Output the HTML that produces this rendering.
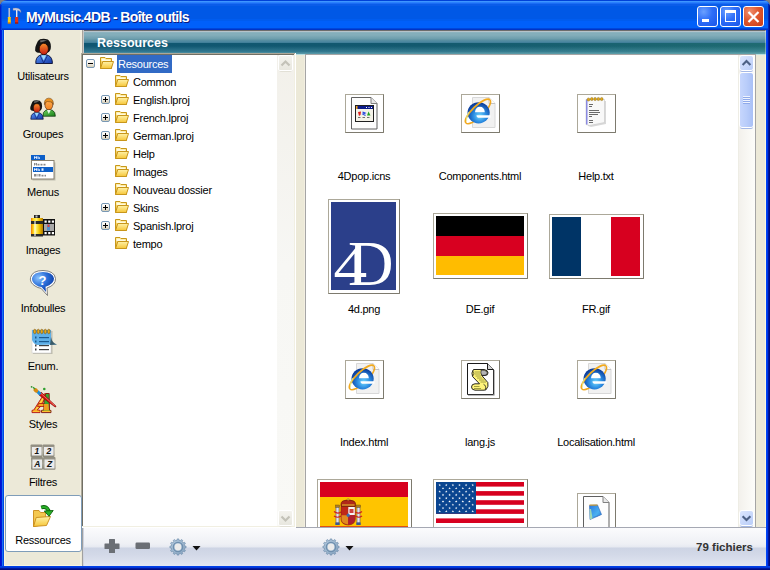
<!DOCTYPE html>
<html><head><meta charset="utf-8">
<style>
*{box-sizing:border-box}
html,body{margin:0;padding:0}
body{width:770px;height:570px;overflow:hidden;position:relative;background:#808080;font-family:"Liberation Sans",sans-serif;font-size:11px;color:#000}
.a{position:absolute}
#win{position:absolute;left:0;top:0;width:770px;height:570px;border-radius:7px 7px 0 0;overflow:hidden;
 background:linear-gradient(90deg,#0012d0 0 1px,#0018d8 1px 2px,#1a70f2 2px 3px,#0048e4 3px 4px,transparent 4px 766px,#0045f5 766px 767px,#0038e8 767px 768px,#0018a0 768px 769px,#000c80 769px)}
#title{left:0;top:0;width:770px;height:30px;
 background:linear-gradient(180deg,#0041d8 0 1px,#3d95ff 1px 2px,#2a80fc 2px 3px,#1a6cf5 3px 4px,#0a5ce9 4px 6px,#0058e6 6px 19px,#005cef 19px 21px,#0060fa 21px 28px,#0047da 28px 29px,#0034c8 29px 30px)}
#ttext{left:26px;top:9px;font-weight:bold;font-size:14px;line-height:16px;color:#fff;text-shadow:1px 1px 0 #0a1a80;white-space:nowrap;letter-spacing:-0.65px}
#bottom{left:0;top:566px;width:770px;height:4px;background:linear-gradient(180deg,#0040e8 0 1px,#0038d8 1px 2px,#0018a0 2px 3px,#000e80 3px)}
#client{left:4px;top:30px;width:762px;height:536px;background:#ece9d8}
.tb{top:6px;width:21px;height:21px;border:1px solid #fff;border-radius:3px}
.lbl{position:absolute;white-space:nowrap;line-height:13px;text-align:center;width:120px;letter-spacing:-0.25px}
.tr{position:absolute;white-space:nowrap;line-height:13px;letter-spacing:-0.25px}
.frm{position:absolute;border:1px solid #aca899;border-right-color:#8d8a7c;border-bottom-color:#77756a;background:#fff}
</style></head>
<body>
<div id="win">
 <div id="title" class="a"></div>
 <div class="a" style="left:0;top:4px;width:1px;height:26px;background:#0020c8"></div>
 <div class="a" style="left:1px;top:5px;width:1px;height:25px;background:#0040e0"></div>
 <div class="a" style="left:768px;top:4px;width:1px;height:26px;background:#0028b8"></div>
 <div class="a" style="left:769px;top:5px;width:1px;height:25px;background:#001090"></div>
 <div id="ttext" class="a">MyMusic.4DB - Boîte outils</div>
 <div id="bottom" class="a"></div>
 <div id="client" class="a"></div>
 <!-- title buttons -->
 <div class="a tb" style="left:697px;background:radial-gradient(circle at 30% 25%,#6aa0ff 0,#2e6ef8 45%,#1a55e8 100%)"><div class="a" style="left:4px;top:12px;width:7px;height:3px;background:#fff"></div></div>
 <div class="a tb" style="left:720px;background:radial-gradient(circle at 30% 25%,#6aa0ff 0,#2e6ef8 45%,#1a55e8 100%)"><div class="a" style="left:4px;top:3px;width:11px;height:12px;border:1px solid #fff;border-top-width:3px"></div></div>
 <div class="a tb" style="left:743px;background:radial-gradient(circle at 30% 25%,#f09070 0,#e0582f 45%,#c83c18 100%)">
  <svg class="a" style="left:0;top:0" width="19" height="19"><path d="M4.5 5 L14.5 15 M14.5 5 L4.5 15" stroke="#fff" stroke-width="2.2"/></svg></div>

 <!-- client highlights -->
 <div class="a" style="left:4px;top:30px;width:1px;height:536px;background:#f8f4e0"></div>
 <div class="a" style="left:4px;top:565px;width:78px;height:1px;background:#f8f4e0"></div>

 <!-- header -->
 <div class="a" style="left:81px;top:30px;width:1px;height:23px;background:#f4f0e0"></div>
 <div class="a" style="left:82px;top:30px;width:1px;height:23px;background:#a8a49c"></div>
 <div class="a" style="left:83px;top:30px;width:1px;height:23px;background:#c8c8c8"></div>
 <div class="a" id="hdr" style="left:84px;top:30px;width:682px;height:25px;
  background:linear-gradient(180deg,#6c6c6c 0 1px,#b6c3ca 1px 2px,#8cb3bf 2px 3px,#84aebb 3px 5px,#6b9cac 9px,#5a90a2 10px,#4a86a0 12px,#3a7a94 13px,transparent 13px),
  linear-gradient(90deg,#0f5672 0,#13596f 50%,#1f6b72 100%)"></div>
 <div class="a" style="left:84px;top:43px;width:682px;height:12px;
  background:linear-gradient(180deg,rgba(255,255,255,0) 0,rgba(255,255,255,0) 3px,rgba(120,190,210,.35) 9px,rgba(140,200,210,.55) 10px 11px,rgba(200,235,235,.9) 11px)"></div>
 <div class="a" style="left:97px;top:35px;font-weight:bold;font-size:12.5px;line-height:16px;color:#fff;white-space:nowrap">Ressources</div>

 <!-- tree panel -->
 <div class="a" id="tree" style="left:81px;top:53px;width:215px;height:475px;background:#fff;
  border-style:solid;border-width:2px;border-color:#716f64 #fff #fff #716f64;overflow:hidden">
 </div>
 <div class="a" style="left:81px;top:53px;width:214px;height:1px;background:#aca899"></div>
 <div class="a" style="left:81px;top:53px;width:1px;height:474px;background:#aca899"></div>
 <div class="a" style="left:82px;top:54px;width:212px;height:1px;background:#716f64"></div>
 <div class="a" style="left:82px;top:54px;width:1px;height:472px;background:#716f64"></div>
 <div class="a" style="left:294px;top:54px;width:1px;height:473px;background:#f1efe2"></div>
 <div class="a" style="left:82px;top:526px;width:213px;height:1px;background:#f1efe2"></div>
 <div class="a" style="left:295px;top:53px;width:1px;height:475px;background:#fff"></div>

 <!-- tree scrollbar (disabled) -->
 <div class="a" style="left:277px;top:55px;width:17px;height:471px;background:linear-gradient(180deg,#f2f0ea,#f7f7f4 45%,#f9f9f6)"></div>
 <div class="a" style="left:279px;top:70px;width:13px;height:2px;background:#e2e0d6;border-radius:0 0 2px 2px"></div>
 <div class="a" style="left:279px;top:525px;width:13px;height:2px;background:#e2e0d6;border-radius:0 0 2px 2px"></div>
 <div class="a" style="left:278px;top:55px;width:15px;height:16px;border:1px solid #fff;border-radius:2px;background:linear-gradient(180deg,#f4f3ee,#e8e7df)"></div>
 <svg class="a" style="left:278px;top:55px" width="15" height="16"><path d="M3.5 10.5 L7.5 6.5 L11.5 10.5" stroke="#c3c2b8" stroke-width="2.2" fill="none"/></svg>
 <div class="a" style="left:278px;top:510px;width:15px;height:16px;border:1px solid #fff;border-radius:2px;background:linear-gradient(180deg,#f4f3ee,#e8e7df)"></div>
 <svg class="a" style="left:278px;top:510px" width="15" height="16"><path d="M3.5 6.5 L7.5 10.5 L11.5 6.5" stroke="#c3c2b8" stroke-width="2.2" fill="none"/></svg>

 <!-- right panel -->
 <div class="a" style="left:305px;top:54px;width:451px;height:474px;background:#fff;border:1px solid #a5a5a5;border-bottom:none;overflow:hidden" id="files">
 </div>

 <!-- tree text -->
 <div class="a" style="left:117px;top:55px;width:55px;height:18px;background:#316ac5"></div>
 <div class="tr" style="left:118px;top:58px;color:#fff">Resources</div>
 <div class="tr" style="left:133px;top:76px">Common</div>
 <div class="tr" style="left:133px;top:94px">English.lproj</div>
 <div class="tr" style="left:133px;top:112px">French.lproj</div>
 <div class="tr" style="left:133px;top:130px">German.lproj</div>
 <div class="tr" style="left:133px;top:148px">Help</div>
 <div class="tr" style="left:133px;top:166px">Images</div>
 <div class="tr" style="left:133px;top:184px">Nouveau dossier</div>
 <div class="tr" style="left:133px;top:202px">Skins</div>
 <div class="tr" style="left:133px;top:220px">Spanish.lproj</div>
 <div class="tr" style="left:133px;top:238px">tempo</div>

 <!-- file labels -->
 <div class="lbl" style="left:304px;top:170px">4Dpop.icns</div>
 <div class="lbl" style="left:420px;top:170px">Components.html</div>
 <div class="lbl" style="left:536px;top:170px">Help.txt</div>
 <div class="lbl" style="left:304px;top:303px">4d.png</div>
 <div class="lbl" style="left:420px;top:303px">DE.gif</div>
 <div class="lbl" style="left:536px;top:303px">FR.gif</div>
 <div class="lbl" style="left:304px;top:436px">Index.html</div>
 <div class="lbl" style="left:420px;top:436px">lang.js</div>
 <div class="lbl" style="left:536px;top:436px">Localisation.html</div>
 <!-- right scrollbar -->
 <div class="a" style="left:738px;top:55px;width:17px;height:472px;background:linear-gradient(90deg,#eeede5 0 1px,#f3f1ec 1px,#fdfdfa 100%)"></div>
 <div class="a" style="left:740px;top:70px;width:13px;height:2px;background:#a4b8e6;border-radius:0 0 2px 2px"></div>
 <div class="a" style="left:739px;top:55px;width:15px;height:16px;border:1px solid #fff;border-radius:3px;background:linear-gradient(135deg,#dce6fe,#b9cdf8)"></div>
 <svg class="a" style="left:739px;top:55px" width="15" height="16"><path d="M3.6 10 L7.5 6.1 L11.4 10" stroke="#4d6185" stroke-width="2.1" fill="none"/></svg>
 <div class="a" style="left:740px;top:127px;width:13px;height:2px;background:#a4b8e6;border-radius:0 0 2px 2px"></div>
 <div class="a" style="left:739px;top:72px;width:15px;height:56px;border:1px solid #fff;border-radius:3px;background:linear-gradient(90deg,#c6d6fd,#b9cdfa 50%,#a9c0f6)"></div>
 <div class="a" style="left:743px;top:96px;width:7px;height:8px;background:repeating-linear-gradient(180deg,#eef3fe 0 1px,#8faaea 1px 2px)"></div>
 <div class="a" style="left:740px;top:525px;width:13px;height:2px;background:#a4b8e6;border-radius:0 0 2px 2px"></div>
 <div class="a" style="left:739px;top:510px;width:15px;height:16px;border:1px solid #fff;border-radius:3px;background:linear-gradient(135deg,#dce6fe,#b9cdf8)"></div>
 <svg class="a" style="left:739px;top:510px" width="15" height="16"><path d="M3.6 6.2 L7.5 10.1 L11.4 6.2" stroke="#4d6185" stroke-width="2.1" fill="none"/></svg>

 <!-- toolbar -->
 <div class="a" id="tool" style="left:82px;top:527px;width:684px;height:39px;
  background:linear-gradient(180deg,#a5a8b3 0 1px,#fbfbfd 1px,#eef0f5 17px,#e6e9f1 20px,#cdd4e4 21px,#d3d9e8 28px,#e2e6f1 39px)"></div>
 <div class="a" style="left:82px;top:527px;width:1px;height:39px;background:#a0a0a0"></div>
 <div class="a" style="left:83px;top:527px;width:1px;height:39px;background:#d0d4e0"></div>
 <div class="a" style="left:646px;top:541px;width:107px;font-weight:bold;font-size:11.5px;color:#333;text-align:right;line-height:13px;white-space:nowrap">79 fichiers</div>

 <!-- sidebar -->
 <div class="a" style="left:81px;top:527px;width:215px;height:1px;background:#fff"></div>
 <div class="a" style="left:80px;top:30px;width:1px;height:536px;background:#f2eee0"></div>
 <div class="a" style="left:304px;top:55px;width:1px;height:472px;background:#f2eee0"></div>
 <div class="a" style="left:765px;top:55px;width:1px;height:472px;background:#fcf6e0"></div>
 <div class="a" style="left:765px;top:30px;width:1px;height:25px;background:rgba(255,255,255,.35)"></div>
 <!-- sidebar selected item -->
 <div class="a" style="left:5px;top:495px;width:77px;height:57px;background:#fff;border:1px solid #7f9db9;border-radius:3px"></div>
 <div class="lbl" style="left:-17px;top:70px">Utilisateurs</div>
 <div class="lbl" style="left:-17px;top:128px">Groupes</div>
 <div class="lbl" style="left:-17px;top:186px">Menus</div>
 <div class="lbl" style="left:-17px;top:244px">Images</div>
 <div class="lbl" style="left:-17px;top:302px">Infobulles</div>
 <div class="lbl" style="left:-17px;top:360px">Enum.</div>
 <div class="lbl" style="left:-17px;top:418px">Styles</div>
 <div class="lbl" style="left:-17px;top:476px">Filtres</div>
 <div class="lbl" style="left:-17px;top:534px">Ressources</div>
 <svg class="a" style="left:0;top:0;pointer-events:none" width="770" height="570">
  <defs>
   <linearGradient id="gFace" x1="0" y1="0" x2="0" y2="1"><stop offset="0" stop-color="#f8902c"/><stop offset="1" stop-color="#c41810"/></linearGradient>
   <linearGradient id="gFaceM" x1="0" y1="0" x2="0" y2="1"><stop offset="0" stop-color="#ffb050"/><stop offset="1" stop-color="#f08020"/></linearGradient>
   <linearGradient id="gBlue" x1="0" y1="0" x2="1" y2="1"><stop offset="0" stop-color="#5a98f8"/><stop offset="1" stop-color="#1438a8"/></linearGradient>
   <linearGradient id="gGreen" x1="0" y1="0" x2="1" y2="1"><stop offset="0" stop-color="#70d060"/><stop offset="1" stop-color="#188018"/></linearGradient>
   <radialGradient id="gBub" cx="0.3" cy="0.3" r="0.8"><stop offset="0" stop-color="#8cc4ff"/><stop offset="0.5" stop-color="#2a6ed8"/><stop offset="1" stop-color="#0a38a0"/></radialGradient>
   <linearGradient id="gCan" x1="0" y1="0" x2="1" y2="0"><stop offset="0" stop-color="#f07800"/><stop offset="0.2" stop-color="#ffd820"/><stop offset="0.45" stop-color="#fff060"/><stop offset="0.7" stop-color="#f0c000"/><stop offset="1" stop-color="#b07800"/></linearGradient>
   <linearGradient id="gFold" x1="0" y1="0" x2="0" y2="1"><stop offset="0" stop-color="#fff2a8"/><stop offset="1" stop-color="#f6c638"/></linearGradient>
   <linearGradient id="gFoldB" x1="0" y1="0" x2="0" y2="1"><stop offset="0" stop-color="#ffe888"/><stop offset="1" stop-color="#e8b02a"/></linearGradient>
   <linearGradient id="gBox" x1="0" y1="0" x2="0" y2="1"><stop offset="0" stop-color="#ffffff"/><stop offset="0.5" stop-color="#f4f0e8"/><stop offset="1" stop-color="#d0c8b0"/></linearGradient>
   <linearGradient id="gKey" x1="0" y1="0" x2="0" y2="1"><stop offset="0" stop-color="#8e8b7e"/><stop offset="0.5" stop-color="#a9a69a"/><stop offset="1" stop-color="#8a877a"/></linearGradient>
   <radialGradient id="gIE" cx="0.55" cy="0.65" r="0.6"><stop offset="0" stop-color="#70d8ff"/><stop offset="0.5" stop-color="#2a8ae0"/><stop offset="1" stop-color="#0c3e9c"/></radialGradient>
   <linearGradient id="gGear" x1="0" y1="0" x2="1" y2="1"><stop offset="0" stop-color="#b8cee2"/><stop offset="1" stop-color="#84a2bf"/></linearGradient>
   <g id="woman">
    <path d="M13 4.3 Q17 3 20.8 4.6 Q23.8 6.5 23.9 11.5 Q23.9 15.8 21.5 17.2 L12.5 17.8 Q9 17.8 8.1 15.5 Q7.7 12.5 9.5 9 Q10.6 5.5 13 4.3 Z" fill="#141414"/>
    <path d="M13 5.5 Q16.5 4.3 20 5.5 Q17 6.5 13.5 7.5 Z" fill="#6a6a6a"/>
    <path d="M8.8 28.5 Q8.5 22.5 12.5 20.5 Q14.5 19.5 16.7 19.5 Q19 19.5 21.5 20.5 Q25.5 22.5 25.4 28.5 Z" fill="url(#gBlue)" stroke="#080c30" stroke-width="0.9"/>
    <ellipse cx="16.8" cy="14" rx="4.6" ry="5.7" fill="url(#gFace)" stroke="#200804" stroke-width="0.8"/>
    <path d="M14.2 20.2 L16.7 25.5 L19.2 20.2 Z" fill="#9ad8fa"/>
    <path d="M13 20.5 L16.7 28 L20.5 20.5" stroke="#101e70" stroke-width="0.7" fill="none"/>
   </g>
   <g id="man">
    <path d="M8.8 28.5 Q8.5 22.5 12.5 20.5 Q14.5 19.5 16.7 19.5 Q19 19.5 21.5 20.5 Q25.5 22.5 25.4 28.5 Z" fill="url(#gGreen)" stroke="#082808" stroke-width="0.9"/>
    <ellipse cx="16.7" cy="13.5" rx="5.2" ry="6.4" fill="url(#gFaceM)" stroke="#502008" stroke-width="0.8"/>
    <path d="M10.8 13 Q10.2 4.8 16.5 4.3 Q23 4.3 22.8 12.8 Q21.5 8.5 18.5 9.2 Q14.5 8 12.2 10 Z" fill="#e89020" stroke="#6a3a08" stroke-width="0.7"/>
    <path d="M14.2 20.2 L16.7 25.5 L19.2 20.2 Z" fill="#e8f8e8"/>
   </g>
   <g id="fold">
    <path d="M2.5 2.5 L7 2.5 L8 3.5 L13.5 3.5 L13.5 13.5 L2.5 13.5 Z" fill="url(#gFoldB)" stroke="#c8981a" stroke-width="1"/>
    <path d="M3.5 3.5 L6.5 3.5 L7.5 4.5 L12.5 4.5 L12.5 6 L3.5 6 Z" fill="#fffbe0"/>
    <path d="M4.8 6.5 L15.5 6.5 L13.3 13.5 L2.5 13.5 Z" fill="url(#gFold)" stroke="#c8961c" stroke-width="1"/>
   </g>
   <g id="boxm">
    <rect x="0.5" y="0.5" width="8" height="8" rx="1.5" fill="url(#gBox)" stroke="#7898b5"/>
    <rect x="2" y="4" width="5" height="1" fill="#000"/>
   </g>
   <g id="boxp">
    <rect x="0.5" y="0.5" width="8" height="8" rx="1.5" fill="url(#gBox)" stroke="#7898b5"/>
    <rect x="2" y="4" width="5" height="1" fill="#000"/>
    <rect x="4" y="2" width="1" height="5" fill="#000"/>
   </g>
   <g id="doc">
    <path d="M0.5 0.5 L20 0.5 L26 6.5 L26 32 L0.5 32 Z" fill="#fdfdfd" stroke="#606060" stroke-width="1"/>
    <path d="M20 0.5 L20 6.5 L26 6.5" fill="#e8e8e8" stroke="#808080" stroke-width="1"/>
   </g>
   <g id="ie">
    <path d="M8.5 0.5 L25 0.5 L31 6.5 L31 30.5 L8.5 30.5 Z" fill="#f1f1f1" stroke="#d8d8d8"/>
    <path d="M25 0.5 L25 6.5 L31 6.5" fill="#fff" stroke="#c4c4c4"/>
    <path d="M2 26 A16.6 5.6 -44 0 0 26 3" fill="none" stroke="#f0a820" stroke-width="1.6"/>
    <ellipse cx="14.6" cy="15.8" rx="11.1" ry="10.6" fill="url(#gIE)"/>
    <path d="M11 15.3 Q11.5 9.8 15.9 9.8 Q20.3 9.8 20.8 15.3 Z" fill="#fff"/>
    <path d="M12.5 18.3 L26.5 18.3 L26.5 20.8 L14 20.8 Q12.3 19.8 12.5 18.3 Z" fill="#fff"/>
    <path d="M2 26 A16.6 5.6 -44 0 1 26 3" fill="none" stroke="#f2aa1e" stroke-width="1.8"/>
    <path d="M2.5 24 Q2 19 5 15" fill="none" stroke="#d8f0a0" stroke-width="0.9"/>
   </g>
  </defs>

  <!-- title icon -->
  <g>
   <rect x="8.6" y="8" width="1.3" height="9.5" fill="#e8e8f0"/>
   <rect x="9.6" y="8" width="0.5" height="9.5" fill="#9090a0"/>
   <path d="M7.8 17 L10.8 17 L10.8 18.5 L10.3 19 L10.8 19.5 L10.8 23.5 L7.8 23.5 L7.8 19.5 L8.3 19 L7.8 18.5 Z" fill="#ffd010"/>
   <rect x="7.8" y="22.5" width="3" height="1" fill="#c05010"/>
   <path d="M13 8.3 Q17 7.6 19.5 9 Q21 10 21 12.5 Q19.5 10.5 17.2 10.3 L13 10.3 Z" fill="#d0d0e0" stroke="#8080a0" stroke-width="0.4"/>
   <rect x="16" y="10" width="1.4" height="7.5" fill="#e8e8f0"/>
   <path d="M15 17 L18.2 17 L18.2 23.5 L15 23.5 Z" fill="#e03018"/>
   <rect x="15" y="22.5" width="3.2" height="1" fill="#801008"/>
  </g>

  <!-- sidebar icons -->
  <use href="#woman" transform="translate(27 35)"/>
  <use href="#man" transform="translate(36.3 94.9) scale(0.75)"/>
  <use href="#woman" transform="translate(24.2 97.3) scale(0.75 0.77)"/>

  <!-- Menus -->
  <g>
   <rect x="31" y="155" width="14" height="5" fill="#0c5fc8"/>
   <g fill="#dce8ff"><rect x="34" y="156.3" width="1" height="2.5"/><rect x="35" y="156.8" width="1" height="1"/><rect x="36" y="156.3" width="1" height="2.5"/><rect x="37.5" y="156.3" width="1" height="2.5"/><rect x="38.5" y="157.3" width="1.5" height="1.5"/></g>
   <rect x="32.5" y="162.5" width="23" height="18" fill="#000" opacity="0.18"/>
   <rect x="31.5" y="160.5" width="22.5" height="18.5" fill="#fff" stroke="#8a8270" stroke-width="1"/>
   <g fill="#8a8a8a"><rect x="34" y="163" width="1" height="2.5"/><rect x="35" y="163.5" width="1" height="1"/><rect x="36" y="163" width="1" height="2.5"/><rect x="37.5" y="163.8" width="2" height="1.7"/><rect x="40.5" y="163.8" width="2" height="1.7"/><rect x="43.5" y="163.8" width="2" height="1.7"/></g>
   <rect x="33" y="167" width="20" height="5" fill="#0c5fc8"/>
   <g fill="#e8f0ff"><rect x="34" y="168.3" width="1" height="2.5"/><rect x="35" y="168.8" width="1" height="1"/><rect x="36" y="168.3" width="1" height="2.5"/><rect x="37.5" y="168.3" width="1" height="2.5"/><rect x="38.5" y="169.3" width="1.5" height="1.5"/><rect x="41.5" y="168.3" width="2" height="2.5"/></g>
   <g fill="#8a8a8a"><rect x="34" y="174" width="2.5" height="2.5"/><rect x="37.5" y="174" width="1" height="2.5"/><rect x="39" y="174" width="1.5" height="2.5"/><rect x="41.5" y="174.8" width="2" height="1.7"/><rect x="44.5" y="174.8" width="1.5" height="1.7"/></g>
  </g>

  <!-- Images -->
  <g>
   <rect x="34" y="215" width="6" height="3" fill="#202020"/>
   <rect x="35.5" y="215.5" width="2" height="2" fill="#c0c0c0"/>
   <rect x="31" y="218" width="12" height="18" fill="url(#gCan)"/>
   <rect x="31" y="221" width="12" height="3" fill="#2a2a2a"/>
   <rect x="31" y="234" width="12" height="2.5" fill="#2a2a2a"/>
   <rect x="34" y="221" width="2" height="15" fill="#ffffff" opacity="0.55"/>
   <rect x="43" y="219" width="12" height="16.5" fill="#111"/>
   <rect x="44.5" y="220.5" width="2.2" height="2.2" fill="#fff"/>
   <rect x="48.2" y="220.5" width="2.2" height="2.2" fill="#fff"/>
   <rect x="51.8" y="220.5" width="2.2" height="2.2" fill="#fff"/>
   <rect x="44.5" y="232" width="2.2" height="2.2" fill="#fff"/>
   <rect x="48.2" y="232" width="2.2" height="2.2" fill="#fff"/>
   <rect x="51.8" y="232" width="2.2" height="2.2" fill="#fff"/>
   <rect x="44" y="224" width="10" height="7" fill="#a8a8a8"/>
   <rect x="47" y="224.5" width="3" height="6" fill="#4a90d0"/>
   <rect x="47.5" y="224.5" width="2" height="2.5" fill="#e04040"/>
  </g>

  <!-- Infobulles -->
  <g>
   <path d="M35 286 Q29.5 282.5 30.5 277.5 Q32.5 270.5 43 270.5 Q54.5 270.8 55.5 278.5 Q55.8 285 47 288 L47.5 295.5 L41 288.3 Q38 288 35 286 Z" fill="#fff" stroke="#707070" stroke-width="0.9"/>
   <path d="M36 285 Q31.5 282 32 278 Q33.5 272 43 272 Q53 272.3 54 278.5 Q54 284 45.5 286.8 L46 292 L41.5 287 Q38.5 286.8 36 285 Z" fill="url(#gBub)"/>
   <text x="42.6" y="285.3" font-family="Liberation Sans" font-weight="bold" font-size="13" fill="#fff" text-anchor="middle">?</text>
  </g>

  <!-- Enum -->
  <g>
   <rect x="33" y="331" width="19.5" height="23" fill="#000" opacity="0.2"/>
   <rect x="32" y="330" width="19" height="23" fill="#fff" stroke="#d0d0d0" stroke-width="0.6"/>
   <path d="M32 330 L51 330 L51 341 Q53 344 57 344.5 L37 345 Q33.5 344 32 340 Z" fill="#5eb0e8"/>
   <path d="M51 337 Q52 343 57 344.5 L50 345 Z" fill="#3a5a68"/>
   <g fill="#e8a818" stroke="#6a4a08" stroke-width="0.5">
    <ellipse cx="34.8" cy="331.5" rx="1.3" ry="2.3"/><ellipse cx="38.3" cy="331.5" rx="1.3" ry="2.3"/><ellipse cx="41.8" cy="331.5" rx="1.3" ry="2.3"/><ellipse cx="45.3" cy="331.5" rx="1.3" ry="2.3"/><ellipse cx="48.8" cy="331.5" rx="1.3" ry="2.3"/>
   </g>
   <rect x="39" y="337" width="10" height="1.2" fill="#1a5a90"/>
   <rect x="39" y="341" width="10" height="1.2" fill="#1a5a90"/>
   <rect x="39" y="345" width="10" height="1.2" fill="#404040"/>
   <rect x="39" y="349" width="10" height="1.2" fill="#404040"/>
   <rect x="35" y="336.5" width="1.5" height="2" fill="#1a5a90"/>
   <rect x="35" y="340.5" width="1.5" height="2" fill="#1a5a90"/>
   <rect x="35" y="344.5" width="1.5" height="2" fill="#404040"/>
   <rect x="35" y="348.5" width="1.5" height="2" fill="#404040"/>
  </g>

  <!-- Styles -->
  <g>
   <path d="M44 394 L47.5 393.5 L41 406 L37.2 410 L40 410.3 L40 412.6 L32 412.6 L32 410.4 L33.8 410 Z" fill="#f8a020" stroke="#b01010" stroke-width="0.9" stroke-linejoin="round"/>
   <path d="M43.5 396.5 L45.5 396 L37 409.5 L35.5 409.5 Z" fill="#ffd848"/>
   <path d="M38.6 403.5 L46.5 403.5 L46.5 406.5 L37.5 406.5 Z" fill="#f8a820" stroke="#b01010" stroke-width="0.8"/>
   <path d="M45.8 393.5 L49.2 393.5 L49.5 410.2 L51 410.5 L51 412.6 L41.5 412.6 L41.5 410.4 L43.8 410 L44.2 399 Z" fill="#38a830" stroke="#8a1010" stroke-width="0.9" stroke-linejoin="round"/>
   <path d="M44 404 L48.5 404 L49 410.5 L43.8 410.5 Z" fill="#f0a020"/>
   <path d="M42 410.8 L50.5 410.8 L50.5 412 L42 412 Z" fill="#ffc030"/>
   <path d="M32.8 410.8 L39.5 410.8 L39.5 412 L32.8 412 Z" fill="#ffc030"/>
   <path d="M41.1 392.1 L55.9 406 Q56.2 407.2 55.1 407 L38.9 394.9 Z" fill="#d41010" stroke="#7a0808" stroke-width="0.6" stroke-linejoin="round"/>
   <path d="M40.5 393 L54.5 405.5" stroke="#ff8070" stroke-width="0.8"/>
   <path d="M37.3 391.3 L40.5 394.3" stroke="#1e8fd8" stroke-width="3.2"/>
   <ellipse cx="35.8" cy="390.3" rx="2.6" ry="2" fill="#d88a10" transform="rotate(40 35.8 390.3)"/>
   <path d="M33 387.2 L35 389" stroke="#30a030" stroke-width="1.4"/>
   <circle cx="31.6" cy="386.8" r="0.9" fill="#309030"/>
   <circle cx="44.3" cy="389" r="1.3" fill="#30a030"/>
  </g>

  <!-- Filtres -->
  <g>
   <rect x="30.5" y="444.5" width="12" height="12.5" rx="1" fill="url(#gKey)"/>
   <rect x="42.5" y="444.5" width="12" height="12.5" rx="1" fill="url(#gKey)"/>
   <rect x="31" y="457" width="12" height="12.8" rx="1" fill="url(#gKey)"/>
   <rect x="43" y="457" width="12.5" height="12.8" rx="1" fill="url(#gKey)"/>
   <rect x="32" y="447" width="9.5" height="8.5" fill="#ebebeb"/>
   <rect x="44" y="447" width="9.5" height="8.5" fill="#ebebeb"/>
   <rect x="32.5" y="459.5" width="9.5" height="9" fill="#ebebeb"/>
   <rect x="44.5" y="459.5" width="10" height="9" fill="#ebebeb"/>
   <g font-family="Liberation Sans" font-style="italic" font-weight="bold" font-size="8.5" fill="#141414" text-anchor="middle">
    <text x="36.8" y="454.3">1</text><text x="48.8" y="454.3">2</text><text x="37.2" y="467.3">A</text><text x="49.5" y="467.3">Z</text>
   </g>
  </g>

  <!-- Ressources -->
  <g>
   <path d="M33.5 510.5 L39 510.5 L40.5 512.5 L45.5 512.5 L46 524 L33.5 526.5 Z" fill="#f4c850" stroke="#c88a18" stroke-width="0.9"/>
   <path d="M36.2 517.5 L50.5 516.5 L46.5 525.5 L33.5 526.5 Z" fill="url(#gFold)" stroke="#c88a18" stroke-width="0.9"/>
   <path d="M41.2 507.5 Q47 505.5 48.8 511.5" fill="none" stroke="#0a600a" stroke-width="3.8"/>
   <path d="M41.2 507.5 Q47 505.5 48.8 511.5" fill="none" stroke="#28b028" stroke-width="2.2"/>
   <path d="M44.3 511 L53.2 510.5 L49 516.3 Z" fill="#28b028" stroke="#0a600a" stroke-width="0.9"/>
  </g>

  <!-- tree icons -->
  <use href="#boxm" x="86" y="59"/>
  <use href="#fold" x="98" y="55"/>
  <use href="#fold" x="113" y="73"/>
  <use href="#boxp" x="101" y="95"/><use href="#fold" x="113" y="91"/>
  <use href="#boxp" x="101" y="113"/><use href="#fold" x="113" y="109"/>
  <use href="#boxp" x="101" y="131"/><use href="#fold" x="113" y="127"/>
  <use href="#fold" x="113" y="145"/>
  <use href="#fold" x="113" y="163"/>
  <use href="#fold" x="113" y="181"/>
  <use href="#boxp" x="101" y="203"/><use href="#fold" x="113" y="199"/>
  <use href="#boxp" x="101" y="221"/><use href="#fold" x="113" y="217"/>
  <use href="#fold" x="113" y="235"/>
 </svg>
 <svg class="a" style="left:0;top:0;pointer-events:none" width="770" height="570">
  <defs>
   <clipPath id="cpF"><rect x="306" y="55" width="433" height="472"/></clipPath>
   <g id="star"><path d="M0 -1.3 L0.35 -0.4 L1.25 -0.4 L0.55 0.15 L0.8 1.05 L0 0.5 L-0.8 1.05 L-0.55 0.15 L-1.25 -0.4 L-0.35 -0.4 Z" fill="#fff"/></g>
  </defs>
  <g clip-path="url(#cpF)">
   <!-- frames -->
   <g fill="#fff" stroke="#aca899">
    <rect x="345.5" y="94.5" width="38" height="38"/>
    <rect x="461.5" y="94.5" width="38" height="38"/>
    <rect x="577.5" y="94.5" width="38" height="38"/>
    <rect x="328.5" y="199.5" width="71" height="94"/>
    <rect x="433.5" y="213.5" width="94" height="65"/>
    <rect x="549.5" y="214.5" width="94" height="64"/>
    <rect x="345.5" y="360.5" width="38" height="38"/>
    <rect x="461.5" y="360.5" width="38" height="38"/>
    <rect x="577.5" y="360.5" width="38" height="38"/>
    <rect x="317.5" y="479.5" width="94" height="65"/>
    <rect x="433.5" y="479.5" width="94" height="65"/>
    <rect x="577.5" y="493.5" width="38" height="38"/>
   </g>
   <g fill="none" stroke="#7d7a6e">
    <path d="M383.5 94.5 V132.5 H345.5"/><path d="M499.5 94.5 V132.5 H461.5"/><path d="M615.5 94.5 V132.5 H577.5"/>
    <path d="M399.5 199.5 V293.5 H328.5"/><path d="M527.5 213.5 V278.5 H433.5"/><path d="M643.5 214.5 V278.5 H549.5"/>
    <path d="M383.5 360.5 V398.5 H345.5"/><path d="M499.5 360.5 V398.5 H461.5"/><path d="M615.5 360.5 V398.5 H577.5"/>
    <path d="M411.5 479.5 V544.5 H317.5"/><path d="M527.5 479.5 V544.5 H433.5"/><path d="M615.5 493.5 V531.5 H577.5"/>
   </g>

   <!-- 4Dpop.icns -->
   <use href="#doc" transform="translate(351 97)"/>
   <rect x="355.5" y="105.5" width="18" height="16" fill="#f4f2e8" stroke="#202020"/>
   <rect x="356" y="106" width="17" height="3" fill="#0a1a8a"/>
   <rect x="356" y="106" width="1.5" height="3" fill="#f0a020"/>
   <rect x="366" y="107" width="1" height="1" fill="#fff"/><rect x="368.5" y="107" width="1" height="1" fill="#fff"/><rect x="371" y="107" width="1" height="1" fill="#fff"/>
   <path d="M358 112 L361 111.5 L360.5 115 L359 116 Z" fill="#e02020"/>
   <path d="M362.5 112 L365 113 L363 114 L365.5 115.5" stroke="#2040e0" stroke-width="1.3" fill="none"/>
   <path d="M367 115.5 L368.5 111.5 L370.5 115.5 Z" fill="#20a020"/>
   <rect x="358" y="117" width="2.5" height="1" fill="#707070"/><rect x="362.5" y="117" width="2.5" height="1" fill="#707070"/><rect x="367" y="117" width="2.5" height="1" fill="#707070"/>

   <!-- Components.html -->
   <use href="#ie" transform="translate(464 97)"/>

   <!-- Help.txt -->
   <g>
    <path d="M587 100 L605 100 L605 123 L590 126 L587 125 Z" fill="#000" opacity="0.15" transform="translate(1 1)"/>
    <path d="M586 99.5 L604.5 99.5 L604.5 122.5 L589.5 125.5 L586 124.5 Z" fill="#f8f8f8" stroke="#c8c8c8" stroke-width="0.6"/>
    <rect x="586" y="99.5" width="1.5" height="25" fill="#8a8ae0"/>
    <g fill="#e0a818" stroke="#7a5a10" stroke-width="0.4">
     <ellipse cx="588.5" cy="99.5" rx="1.4" ry="1.6"/><ellipse cx="591.8" cy="99" rx="1.4" ry="1.6"/><ellipse cx="595.1" cy="99" rx="1.4" ry="1.6"/><ellipse cx="598.4" cy="99" rx="1.4" ry="1.6"/><ellipse cx="601.7" cy="99" rx="1.4" ry="1.6"/>
    </g>
    <g fill="#6a6a6a">
     <rect x="589" y="104" width="4" height="1"/><rect x="589" y="106" width="3" height="1"/>
     <rect x="589" y="110" width="10" height="1"/><rect x="589" y="112" width="11" height="1"/><rect x="589" y="114" width="9" height="1"/><rect x="589" y="116" width="3" height="1"/>
     <rect x="589" y="120" width="4" height="1"/><rect x="589" y="122" width="4" height="1"/>
    </g>
   </g>

   <!-- 4d.png -->
   <rect x="331" y="202" width="65" height="88" fill="#2b3f8a"/>
   <g font-family="Liberation Serif" font-size="63" fill="#fff"><text x="348" y="284.5">D</text><text transform="translate(333.5 284.5) scale(1.07 0.92)">4</text></g>

   <!-- DE -->
   <rect x="436" y="216" width="88" height="20" fill="#000"/>
   <rect x="436" y="236" width="88" height="20" fill="#d80020"/>
   <rect x="436" y="256" width="88" height="19" fill="#ffbc00"/>

   <!-- FR -->
   <rect x="552" y="217" width="29" height="59" fill="#003466"/>
   <rect x="581" y="217" width="30" height="59" fill="#fff"/>
   <rect x="611" y="217" width="29" height="59" fill="#d7001f"/>

   <!-- Index.html / lang.js / Localisation.html -->
   <use href="#ie" transform="translate(348 363)"/>
   <use href="#ie" transform="translate(580 363)"/>
   <g>
    <path d="M467.5 363.5 L487.5 363.5 L493.5 369.5 L493.5 394.5 L467.5 394.5 Z" fill="#fff" stroke="#1a1a1a"/>
    <path d="M487.5 363.5 L487.5 369.5 L493.5 369.5" fill="#d4d4d4" stroke="#1a1a1a"/>
    <path d="M494.3 370 L494.3 395.3 L468 395.3" fill="none" stroke="#a0a0a0" stroke-width="0.9"/>
    <path d="M473.5 369.5 L484 369.5 Q488 370 488 372.8 Q488 375.5 485 375.5 L481.8 375.5 L487.8 382.5 Q489 386.5 486 389.8 L484 390.2 L475 390.2 Q471.5 389.8 471.5 387 Q471.5 384 475 383.8 L479.5 383.8 L472.6 376.6 Q470.8 373 473.5 369.5 Z" fill="#fff47a" stroke="#111" stroke-width="0.9" stroke-linejoin="round"/>
    <path d="M481.2 370 Q485 369.6 487.3 371.8 Q488 375 485 375.3 L481.8 375.3 Q480.2 373 481.2 370 Z" fill="#b4b4b4" stroke="#111" stroke-width="0.7"/>
    <path d="M472.8 376.3 Q475 373.5 472.5 370.5" fill="none" stroke="#111" stroke-width="0.6"/>
    <g stroke="#8a8a30" stroke-width="0.8">
     <path d="M474.5 372 H480 M474.5 374 H480.5 M475.5 376 H481 M477 378 H482.5 M479 380 H484.5 M480.5 382 H486 M474 386.5 H479.5 M474 388.5 H481"/>
    </g>
    <path d="M483.5 384.2 Q486.5 385.5 485.3 389.5" fill="none" stroke="#111" stroke-width="0.7"/>
   </g>

   <!-- ES -->
   <rect x="320" y="482" width="88" height="15" fill="#d7001f"/>
   <rect x="320" y="497" width="88" height="30" fill="#ffc400"/>
   <rect x="320" y="526" width="88" height="1" fill="#e05010"/>
   <g>
    <rect x="336" y="507" width="3" height="16" fill="#e4e4ea" stroke="#50507a" stroke-width="0.6"/>
    <rect x="357" y="507" width="3" height="16" fill="#e4e4ea" stroke="#50507a" stroke-width="0.6"/>
    <rect x="335.5" y="505" width="4" height="2.2" fill="#b08020" stroke="#604010" stroke-width="0.4"/><rect x="356.5" y="505" width="4" height="2.2" fill="#b08020" stroke="#604010" stroke-width="0.4"/>
    <rect x="335.3" y="522.5" width="4.4" height="2.5" fill="#3a5890"/><rect x="356.3" y="522.5" width="4.4" height="2.5" fill="#3a5890"/>
    <path d="M334 511.5 Q337.5 514.5 341 512 M334 516 Q337.5 518.5 341 516 M355.5 512 Q359 514.5 362 511.5 M355.5 516 Q359 518.5 362 516" stroke="#d02020" stroke-width="1.1" fill="none"/>
    <path d="M341 506.5 L355.3 506.5 L355.3 519 Q355.3 524.5 348.2 525 Q341 524.5 341 519 Z" fill="#c02818" stroke="#802010" stroke-width="0.6"/>
    <rect x="348.3" y="507" width="6.5" height="8" fill="#f4f4f4"/>
    <rect x="349.5" y="509" width="4" height="4" fill="#d04040"/>
    <path d="M341.5 515.3 L348.2 515.3 L348.2 524.5 Q341.5 523.5 341.5 519 Z" fill="#e08a20"/>
    <path d="M348.2 515.3 L354.8 515.3 L354.8 519 Q354.8 523.5 348.2 524.5 Z" fill="#b02030"/>
    <ellipse cx="348.2" cy="515.3" rx="1.6" ry="1.8" fill="#3a6ab0"/>
    <path d="M341 506.3 Q340.5 501.5 343.5 500.8 Q348.2 498.8 353 500.8 Q356 501.5 355.5 506.3 Z" fill="#b02818" stroke="#6a1808" stroke-width="0.7"/>
    <path d="M342 505 L354.5 505" stroke="#e0b030" stroke-width="1.2"/>
    <circle cx="348.2" cy="499.3" r="1.2" fill="#d0a020"/>
   </g>

   <!-- US -->
   <g>
    <rect x="436" y="482" width="88" height="59" fill="#fff"/>
    <g fill="#d7001f">
     <rect x="436" y="482" width="88" height="4.6"/><rect x="436" y="491.1" width="88" height="4.6"/><rect x="436" y="500.2" width="88" height="4.6"/>
     <rect x="436" y="509.3" width="88" height="4.6"/><rect x="436" y="518.4" width="88" height="4.6"/><rect x="436" y="527.5" width="88" height="4.6"/><rect x="436" y="536.6" width="88" height="4.4"/>
    </g>
    <rect x="436" y="482" width="40" height="31.8" fill="#0a4590"/>
    <g>
     <use href="#star" x="439.7" y="485.1"/><use href="#star" x="446.3" y="485.1"/><use href="#star" x="452.9" y="485.1"/><use href="#star" x="459.5" y="485.1"/><use href="#star" x="466.1" y="485.1"/><use href="#star" x="472.7" y="485.1"/>
     <use href="#star" x="443" y="488.3"/><use href="#star" x="449.6" y="488.3"/><use href="#star" x="456.2" y="488.3"/><use href="#star" x="462.8" y="488.3"/><use href="#star" x="469.4" y="488.3"/>
     <use href="#star" x="439.7" y="491.6"/><use href="#star" x="446.3" y="491.6"/><use href="#star" x="452.9" y="491.6"/><use href="#star" x="459.5" y="491.6"/><use href="#star" x="466.1" y="491.6"/><use href="#star" x="472.7" y="491.6"/>
     <use href="#star" x="443" y="494.9"/><use href="#star" x="449.6" y="494.9"/><use href="#star" x="456.2" y="494.9"/><use href="#star" x="462.8" y="494.9"/><use href="#star" x="469.4" y="494.9"/>
     <use href="#star" x="439.7" y="498.2"/><use href="#star" x="446.3" y="498.2"/><use href="#star" x="452.9" y="498.2"/><use href="#star" x="459.5" y="498.2"/><use href="#star" x="466.1" y="498.2"/><use href="#star" x="472.7" y="498.2"/>
     <use href="#star" x="443" y="501.5"/><use href="#star" x="449.6" y="501.5"/><use href="#star" x="456.2" y="501.5"/><use href="#star" x="462.8" y="501.5"/><use href="#star" x="469.4" y="501.5"/>
     <use href="#star" x="439.7" y="504.8"/><use href="#star" x="446.3" y="504.8"/><use href="#star" x="452.9" y="504.8"/><use href="#star" x="459.5" y="504.8"/><use href="#star" x="466.1" y="504.8"/><use href="#star" x="472.7" y="504.8"/>
     <use href="#star" x="443" y="508.1"/><use href="#star" x="449.6" y="508.1"/><use href="#star" x="456.2" y="508.1"/><use href="#star" x="462.8" y="508.1"/><use href="#star" x="469.4" y="508.1"/>
     <use href="#star" x="439.7" y="511.3"/><use href="#star" x="446.3" y="511.3"/><use href="#star" x="452.9" y="511.3"/><use href="#star" x="459.5" y="511.3"/><use href="#star" x="466.1" y="511.3"/><use href="#star" x="472.7" y="511.3"/>
    </g>
   </g>

   <!-- last doc -->
   <use href="#doc" transform="translate(583 496)"/>
   <defs><linearGradient id="gNp" x1="0" y1="0" x2="1" y2="1"><stop offset="0" stop-color="#2a78e0"/><stop offset="0.6" stop-color="#4ab0f0"/><stop offset="1" stop-color="#2070d0"/></linearGradient></defs>
   <path d="M589.5 505.5 L597.5 505 L601.5 514.5 L597 516.5 L590 519.5 Z" fill="url(#gNp)" stroke="#2a60b8" stroke-width="0.6"/>
   <path d="M589.5 509 L590 519.5 L592.5 518.5 L591 509 Z" fill="#b8e8a8" opacity="0.8"/>
   <path d="M591 517.5 L597 516.5 L601.5 514.5 Z" fill="#3a80d0"/>
   <rect x="589.5" y="504.5" width="8" height="1.2" fill="#c89830"/>
  </g>

  <!-- toolbar icons -->
  <g fill="#6b6f75">
   <path d="M109.5 539 H114.5 Q115 539 115 539.5 V543.5 H119 Q119.5 543.5 119.5 544 V548.5 Q119.5 549 119 549 H115 V552.5 Q115 553 114.5 553 H109.5 Q109 553 109 552.5 V549 H105 Q104.5 549 104.5 548.5 V544 Q104.5 543.5 105 543.5 H109 V539.5 Q109 539 109.5 539 Z"/>
   <rect x="135.5" y="542.5" width="14.5" height="6.5" rx="1.2"/>
  </g>
  <g id="gear">
   <g transform="translate(178 547)">
    <path d="M6.52 -1.03 L8.06 -0.85 L8.06 0.85 L6.52 1.03 L6.16 2.37 L7.40 3.29 L6.55 4.76 L5.13 4.15 L4.15 5.13 L4.76 6.55 L3.29 7.40 L2.37 6.16 L1.03 6.52 L0.85 8.06 L-0.85 8.06 L-1.03 6.52 L-2.37 6.16 L-3.29 7.40 L-4.76 6.55 L-4.15 5.13 L-5.13 4.15 L-6.55 4.76 L-7.40 3.29 L-6.16 2.37 L-6.52 1.03 L-8.06 0.85 L-8.06 -0.85 L-6.52 -1.03 L-6.16 -2.37 L-7.40 -3.29 L-6.55 -4.76 L-5.13 -4.15 L-4.15 -5.13 L-4.76 -6.55 L-3.29 -7.40 L-2.37 -6.16 L-1.03 -6.52 L-0.85 -8.06 L0.85 -8.06 L1.03 -6.52 L2.37 -6.16 L3.29 -7.40 L4.76 -6.55 L4.15 -5.13 L5.13 -4.15 L6.55 -4.76 L7.40 -3.29 L6.16 -2.37 Z" fill="url(#gGear)" stroke="#6f8daa" stroke-width="0.7"/>
    <circle r="4.6" fill="none" stroke="#6f8fae" stroke-width="1.4"/>
    <circle r="3.4" fill="#ebebeb"/>
   </g>
  </g>
  <path d="M192.5 546 L200.5 546 L196.5 550.5 Z" fill="#111"/>
  <use href="#gear" transform="translate(153 0)"/>
  <path d="M345.5 546 L353.5 546 L349.5 550.5 Z" fill="#111"/>
 </svg>
</div>
</body></html>
